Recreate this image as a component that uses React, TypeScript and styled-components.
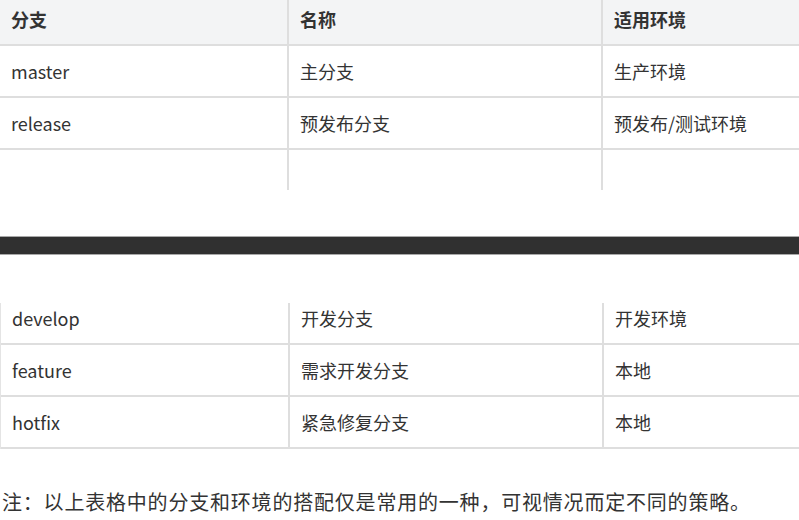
import React from 'react';
import styled, {createGlobalStyle} from 'styled-components';

const GlobalStyle = createGlobalStyle`
	html, body {
		margin: 0;
		padding: 0;
		background: #ffffff;
	}
	body {
		width: 799px;
		height: 520px;
		overflow: hidden;
		font-family: "Noto Sans CJK SC", "Noto Sans", sans-serif;
		color: #333333;
	}
`;

const topRows = [
	['master', '主分支', '生产环境'],
	['release', '预发布分支', '预发布/测试环境'],
	['', '', '']
];

const bottomRows = [
	['develop', '开发分支', '开发环境'],
	['feature', '需求开发分支', '本地'],
	['hotfix', '紧急修复分支', '本地']
];

export default function App() {
	const renderRow = (row: string[], i: number) => (
		<Row key={i}>
			{row.map((text, j) => (
				<Cell key={j} $last={j === row.length - 1}>
					{text}
				</Cell>
			))}
		</Row>
	);

	return (
		<>
			<GlobalStyle />
			<Page>
				<Fragment $height={190}>
					<Table $offset={-6}>
						<Row $head>
							<Cell $head>分支</Cell>
							<Cell $head>名称</Cell>
							<Cell $head $last>
								适用环境
							</Cell>
						</Row>
						{topRows.map((row, i) => renderRow(row, i))}
					</Table>
				</Fragment>
				<PageBreak />
				<Fragment $height={146} $edge>
					<Table $offset={-10}>
						{bottomRows.map((row, i) => renderRow(row, i))}
					</Table>
				</Fragment>
				<Note>
					注：以上表格中的分支和环境的搭配仅是常用的一种，可视情况而定不同的策略。
				</Note>
			</Page>
		</>
	);
}

const Page = styled.div`
	display: flex;
	flex-direction: column;
	width: 799px;
`;

const Fragment = styled.div<{$height: number; $edge?: boolean}>`
	height: ${(p) => p.$height}px;
	overflow: hidden;
	border-left: ${(p) => (p.$edge ? '1px solid #e4e4e4' : 'none')};
`;

const Table = styled.div<{$offset: number}>`
	display: flex;
	flex-direction: column;
	margin-top: ${(p) => p.$offset}px;
	width: 820px;
`;

const Row = styled.div<{$head?: boolean}>`
	display: grid;
	grid-template-columns: 289px 314px 1fr;
	height: 52px;
	background: ${(p) => (p.$head ? '#f3f4f5' : '#ffffff')};
`;

const Cell = styled.div<{$head?: boolean; $last?: boolean}>`
	display: flex;
	align-items: center;
	padding: 0 11px;
	border-bottom: 2px solid #dedede;
	border-right: ${(p) => (p.$last ? 'none' : '2px solid #dedede')};
	font-size: 18px;
	font-weight: ${(p) => (p.$head ? 700 : 400)};
	color: #333333;
	white-space: nowrap;
`;

const PageBreak = styled.div`
	height: 17px;
	margin: 46px 0 48px;
	background: #303030;
	border-top: 1px solid #a8a8a8;
	border-bottom: 1px solid #a8a8a8;
`;

const Note = styled.p`
	margin: 39px 0 0 2px;
	font-size: 20px;
	line-height: 28px;
	color: #333333;
	white-space: nowrap;
	text-spacing-trim: space-all;
	font-feature-settings: "chws" 0, "halt" 0, "palt" 0;
	letter-spacing: 0.8px;
`;
